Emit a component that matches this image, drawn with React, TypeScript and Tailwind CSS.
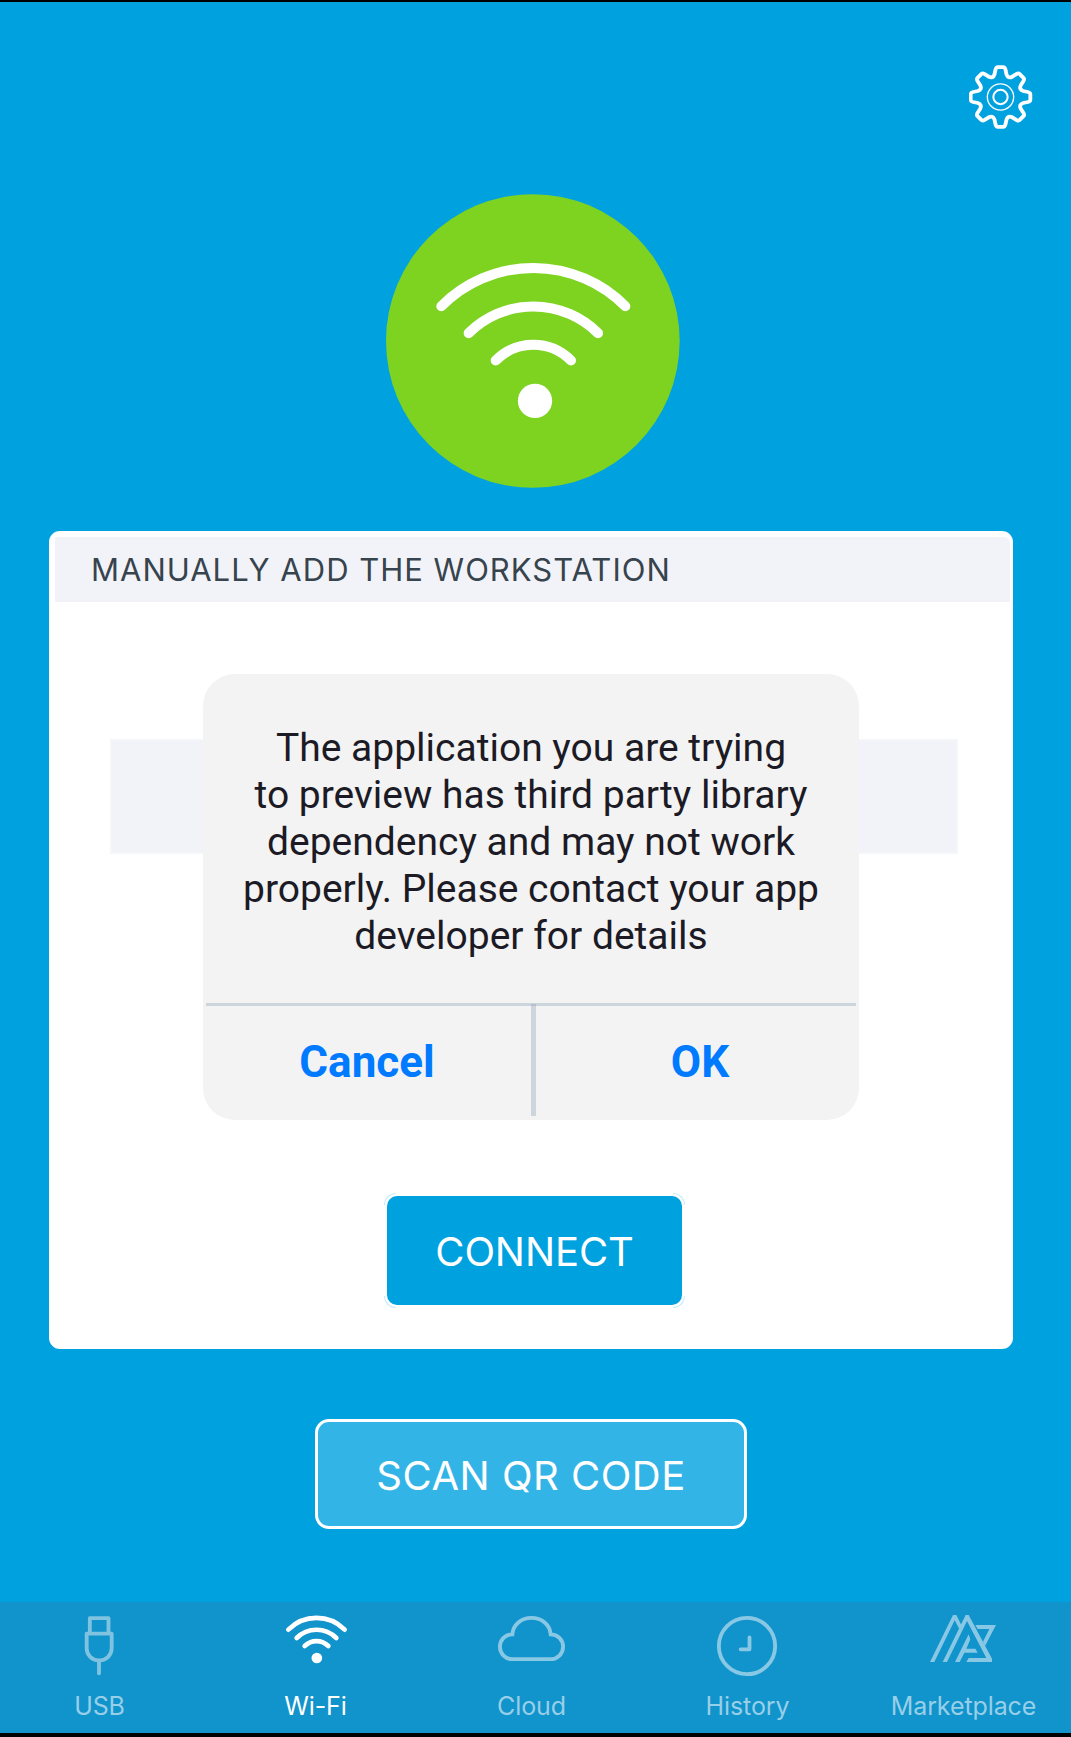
import type { ReactNode } from "react";

const toothAngles = [0, 45, 90, 135, 180, 225, 270, 315];

function rotated(x: number, y: number, degrees: number) {
  const a = (degrees * Math.PI) / 180;
  const px = x * Math.cos(a) - y * Math.sin(a);
  const py = x * Math.sin(a) + y * Math.cos(a);
  return `${px.toFixed(2)} ${py.toFixed(2)}`;
}

const gearPath =
  toothAngles
    .map((a, i) => {
      const p = (x: number, y: number) => rotated(x, y, a);
      return [
        `${i === 0 ? "M" : "L"}${p(-18, -68)}`,
        `L${p(-15, -82)}`,
        `Q${p(-13, -89.5)} ${p(-8, -89.5)}`,
        `L${p(8, -89.5)}`,
        `Q${p(13, -89.5)} ${p(15, -82)}`,
        `L${p(18, -68)}`,
        `Q${p(23, -54.5)} ${rotated(-18, -68, a + 45)}`,
      ].join(" ");
    })
    .join(" ") + "Z";

function GearIcon() {
  return (
    <svg className="size-16" viewBox="-94.5 -96 192 192" fill="none" stroke="white">
      <path d={gearPath} strokeWidth="11.5" strokeLinejoin="round" />
      <circle r="39.5" strokeWidth="4" />
      <circle r="21.5" strokeWidth="6" />
    </svg>
  );
}

function WifiBadge() {
  return (
    <svg className="size-[294px]" viewBox="48 41.5 882 882" fill="none">
      <circle cx="488.5" cy="482.5" r="440.5" fill="#7ed321" />
      <g stroke="white" strokeWidth="30" strokeLinecap="round">
        <path d="M214 378A389 389 0 0 1 766 378" />
        <path d="M296 459A275 275 0 0 1 684 459" />
        <path d="M377 541A159 159 0 0 1 603 541" />
      </g>
      <circle cx="495" cy="662" r="51.5" fill="white" />
    </svg>
  );
}

type TabProps = { label: string; viewBox: string; active?: boolean; children: ReactNode };

function Tab({ label, viewBox, active, children }: TabProps) {
  return (
    <button
      className={
        active
          ? "flex flex-col items-center pt-2 text-white"
          : "flex flex-col items-center pt-2 text-[#98cfe8]"
      }
    >
      <svg className="mr-[1px] h-[70px] w-20" viewBox={viewBox} fill="none" stroke="currentColor" strokeWidth="11.5">
        {children}
      </svg>
      <span className="mt-[10px] text-[25px] leading-[33px] tracking-[-0.1px]">{label}</span>
    </button>
  );
}

export default function App() {
  return (
    <div className="flex h-[1737px] w-[1071px] flex-col overflow-hidden border-t-2 border-b-4 border-black bg-[#00a1df] font-['Inter',sans-serif]">
      <header className="flex justify-end pt-[63px] pr-[38px]">
        <button aria-label="Settings">
          <GearIcon />
        </button>
      </header>

      <main className="flex flex-1 flex-col items-center">
        <div className="mt-[65px] mr-[5px]">
          <WifiBadge />
        </div>

        <section className="relative mt-[43px] mr-[9px] flex h-[818px] w-[964px] flex-col items-center rounded-[11px] bg-white pt-[6px]">
          <h1 className="ml-[3px] flex h-[65px] w-[955px] items-center rounded-tr-md bg-[#f2f3f8] pt-[1px] pl-[36px] text-[31px] tracking-[1px] text-[#37434d]">
            MANUALLY ADD THE WORKSTATION
          </h1>
          <div className="mt-[137px] ml-[6px] h-[115px] w-[848px] border-2 border-[#f5f6fa] bg-[#f2f3f8]" />
          <button className="relative mt-[342px] ml-[7px] flex h-[109px] w-[295px] items-center justify-center rounded-[10px] bg-[#00a1df] pt-[2px] text-[40px] tracking-[-0.1px] text-white">
            CONNECT
            <span className="absolute -top-[3px] -left-[3px] size-3 rounded-tl-[12px] border-t border-l border-[#c4eaf8]" />
            <span className="absolute -top-[3px] -right-[3px] size-3 rounded-tr-[12px] border-t border-r border-[#c4eaf8]" />
            <span className="absolute -bottom-[3px] -left-[3px] size-3 rounded-bl-[12px] border-b border-l border-[#c4eaf8]" />
            <span className="absolute -right-[3px] -bottom-[3px] size-3 rounded-br-[12px] border-r border-b border-[#c4eaf8]" />
          </button>

          <div
            role="dialog"
            className="absolute top-[143px] left-[154px] flex h-[446px] w-[656px] flex-col rounded-[32px] bg-[#f3f3f3] font-['Roboto',sans-serif]"
          >
            <p className="h-[329px] pt-[51px] text-center text-[39px] leading-[47px] text-[#1c1b25]">
              The application you are trying
              <br />
              to preview has third party library
              <br />
              dependency and may not work
              <br />
              properly. Please contact your app
              <br />
              developer for details
            </p>
            <div className="mx-[3px] h-[3px] shrink-0 bg-[#cdd5dc]" />
            <div className="flex h-[110px] text-[44px] font-bold text-[#007aff]">
              <button className="w-[328px] pt-[2px]">Cancel</button>
              <div className="relative w-[5px] bg-[#cdd5dd]">
                <span className="absolute -top-[2px] left-0 h-[2px] w-[5px] bg-[#b5c0cc]" />
              </div>
              <button className="w-[323px] pt-[2px] pl-[5px]">OK</button>
            </div>
          </div>
        </section>

        <button className="mt-[70px] mr-[9px] flex h-[110px] w-[432px] items-center justify-center rounded-[14px] border-3 border-white bg-[#33b4e6] pt-[3px] text-[40px] tracking-[0.5px] text-white">
          SCAN QR CODE
        </button>
      </main>

      <nav className="h-[131px] shrink-0 bg-[#1193cb]">
        <div className="-ml-[8.5px] grid w-[1080px] grid-cols-5">
          <Tab label="USB" viewBox="177 60 240 210">
            <g stroke="#80c3e1">
              <path d="M269.500 126V84.500H325.500V126M260 131H335V175A36 36 0 0 1 299 211H296A36 36 0 0 1 260 175Z" strokeLinejoin="round" />
              <path d="M297 214V250" strokeLinecap="round" />
            </g>
          </Tab>
          <Tab label="Wi-Fi" viewBox="825 60 240 210" active>
            <g strokeWidth="14" strokeLinecap="round">
              <path d="M865 119A119 119 0 0 1 1034 119" />
              <path d="M890 144A84 84 0 0 1 1009 144" />
              <path d="M914 168A50 50 0 0 1 985 168" />
            </g>
            <circle cx="950.500" cy="204" r="16" fill="currentColor" stroke="none" />
          </Tab>
          <Tab label="Cloud" viewBox="153 60 240 210">
            <path
              stroke="#89c8e4"
              d="M217 207.500A37 37 0 0 1 217 133C219 104 244 83.500 274.500 83.500C305 83.500 330 104 332 133A37 37 0 0 1 332 207.500Z"
            />
          </Tab>
          <Tab label="History" viewBox="801 60 240 210">
            <g stroke="#89c8e4">
              <circle cx="921" cy="168" r="84.500" />
              <path d="M928.500 142V178H902" strokeLinecap="round" strokeLinejoin="round" />
            </g>
          </Tab>
          <Tab label="Marketplace" viewBox="369 60 240 210">
            <g fill="#89c8e4" stroke="none">
              <path d="M390 216L459 75H469L484 105L478 117L464 91L403 216Z" />
              <path d="M428 216L497 75H506L576 206V216H499L506 204H559L501 93L441 216Z" />
              <path d="M465 216L506 133L511 148L499 176H526L533 188H493L479 216Z" />
              <path d="M526 105H588L555 168L549 155L568 117H533Z" />
            </g>
          </Tab>
        </div>
      </nav>
    </div>
  );
}
